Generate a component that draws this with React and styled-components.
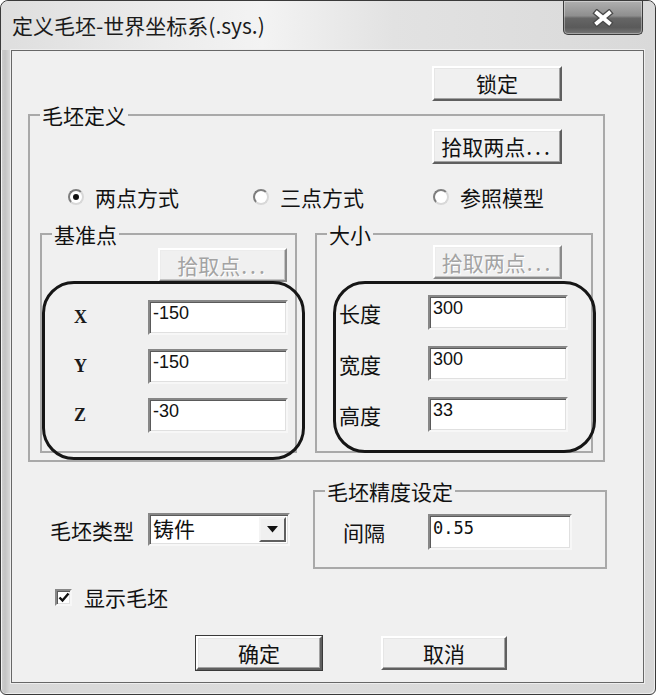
import React from 'react';
import styled, { createGlobalStyle, css } from 'styled-components';

const CJK = `"Noto Sans CJK SC", "Noto Sans CJK JP", "Liberation Sans", sans-serif`;

const GlobalStyle = createGlobalStyle`
  html, body { margin: 0; padding: 0; background: #ffffff; }
  body { font-family: ${CJK}; }
  *, *::before, *::after { box-sizing: border-box; }
`;

const Window = styled.div`
  width: 656px;
  height: 695px;
  border: 1px solid #3a3a3a;
  border-radius: 8px 8px 6px 6px;
  background: linear-gradient(90deg, #cfcfcf 0px, #c4c4c4 4px, #d8d8d8 9px, #dcdcdc 50%, #d6d6d6 100%);
  box-shadow: inset 1px 1px 0 #f2f2f2, inset -1px -1px 0 #ededed;
  padding: 0 11px 11px 10px;
  display: flex;
  flex-direction: column;
  font-family: ${CJK};
  color: #111;
  overflow: hidden;
`;

const TitleBar = styled.div`
  height: 49px;
  margin: 0 -11px 0 -10px;
  padding: 0 12px 0 11px;
  display: flex;
  align-items: flex-start;
  justify-content: space-between;
  background: linear-gradient(90deg, #dedede 0%, #ececec 25%, #f3f3f3 40%, #e2e2e2 60%, #d9d9d9 100%);
  border-radius: 7px 7px 0 0;
`;

const Title = styled.div`
  font-size: 21px;
  line-height: 49px;
  color: #1b1b1b;
  white-space: nowrap;
`;

const CloseButton = styled.div`
  width: 80px;
  height: 34px;
  border: 1px solid #3c3c3c;
  border-top: none;
  border-radius: 0 0 5px 5px;
  background: linear-gradient(180deg, #b0b0b0 0%, #8e8e8e 45%, #666666 52%, #5a5a5a 80%, #777777 100%);
  box-shadow: inset 0 0 0 1px rgba(255, 255, 255, 0.35);
  display: flex;
  align-items: center;
  justify-content: center;
`;

const Client = styled.div`
  flex: 1;
  background: #f0f0f0;
  border: 1px solid #676767;
  box-shadow: 0 0 0 1px #eeeeee;
  display: flex;
  flex-direction: column;
`;

const RightRow = styled.div`
  display: flex;
  justify-content: flex-end;
  padding-right: ${(p) => p.$pr}px;
  margin-top: ${(p) => p.$mt}px;
`;

const Button = styled.button`
  width: ${(p) => p.$w}px;
  height: ${(p) => p.$h || 35}px;
  padding: 0;
  margin: 0;
  font-family: ${CJK};
  font-size: 21px;
  line-height: 1;
  color: #111;
  background: #f0f0f0;
  border: 2px solid;
  border-color: #ffffff #5f5f5f #5f5f5f #ffffff;
  box-shadow: inset -1px -1px 0 #a2a2a2, inset 1px 1px 0 #e6e6e6;
  display: flex;
  align-items: center;
  justify-content: center;
  ${(p) =>
    p.$default &&
    css`
      outline: 1px solid #3a3a3a;
    `}
  ${(p) =>
    p.disabled &&
    css`
      color: #a3a3a3;
      text-shadow: 1px 1px 0 #ffffff;
      border-color: #ffffff #8a8a8a #8a8a8a #ffffff;
      box-shadow: inset -1px -1px 0 #c4c4c4, inset 1px 1px 0 #ececec;
    `}
`;

const Dots = styled.span`
  letter-spacing: 3px;
  margin-left: 1px;
`;

const Group = styled.fieldset`
  margin: ${(p) => p.$m || 0};
  padding: 0;
  min-width: 0;
  width: ${(p) => p.$w}px;
  height: ${(p) => p.$h}px;
  border: 2px solid #a9a9a9;
  display: flex;
  flex-direction: column;
  position: relative;
`;

const Legend = styled.legend`
  margin-left: 10px;
  padding: 0 2px;
  font-size: 21px;
  line-height: 22px;
  height: 22px;
  color: #111;
`;

const RadioRow = styled.div`
  display: flex;
  align-items: center;
  height: 24px;
  margin-top: 21px;
  padding-left: 38px;
`;

const RadioItem = styled.label`
  display: flex;
  align-items: center;
  gap: 11px;
  width: ${(p) => p.$w}px;
  font-size: 21px;
  line-height: 24px;
`;

const RadioCircle = styled.span`
  flex: none;
  width: 16px;
  height: 16px;
  border-radius: 50%;
  background: #ffffff;
  border: 2px solid;
  border-color: #7e7e7e #d8d8d8 #d8d8d8 #7e7e7e;
  display: flex;
  align-items: center;
  justify-content: center;
`;

const RadioDot = styled.span`
  width: 6px;
  height: 6px;
  border-radius: 50%;
  background: #111;
`;

const SubRow = styled.div`
  position: relative;
  display: flex;
  gap: 18px;
  margin-top: 14px;
  padding-left: 10px;
`;

const FieldGrid = styled.div`
  display: grid;
  grid-template-columns: ${(p) => p.$label}px ${(p) => p.$input}px;
  grid-auto-rows: ${(p) => p.$rh || 35}px;
  row-gap: ${(p) => p.$gap || 0}px;
  align-items: center;
  margin-top: ${(p) => p.$mt}px;
  padding-left: ${(p) => p.$pl}px;
`;

const AxisLabel = styled.span`
  font-family: "Liberation Serif", "DejaVu Serif", serif;
  font-weight: bold;
  font-size: 18px;
  color: #1a1a1a;
`;

const Label = styled.span`
  font-size: 21px;
  line-height: 24px;
  color: #111;
  white-space: nowrap;
`;

const sunken = css`
  background: #ffffff;
  border: 2px solid;
  border-color: #878787 #f7f7f7 #f7f7f7 #878787;
  box-shadow: inset 1px 1px 0 #5a5a5a, inset -1px -1px 0 #e0e0e0;
`;

const Field = styled.input`
  ${sunken};
  width: 100%;
  height: ${(p) => p.$h || 35}px;
  padding: 1px 3px 10px;
  margin: 0;
  font-family: ${(p) => (p.$mono ? `"DejaVu Sans Mono", "Liberation Mono", monospace` : `"Liberation Sans", Arial, sans-serif`)};
  font-size: ${(p) => (p.$mono ? 17 : 18)}px;
  color: #111;
  outline: none;
`;

const Annotation = styled.div`
  position: absolute;
  left: ${(p) => p.$x}px;
  top: ${(p) => p.$y}px;
  width: ${(p) => p.$w}px;
  height: ${(p) => p.$h}px;
  border: 3px solid #161616;
  border-radius: 32px;
  pointer-events: none;
`;

const BottomRow = styled.div`
  display: flex;
  align-items: flex-start;
  margin-top: 18px;
  padding-left: 38px;
`;

const TypeRow = styled.div`
  display: flex;
  align-items: center;
  margin-top: 33px;
`;

const TypeLabel = styled(Label)`
  width: 98px;
`;

const Combo = styled.div`
  ${sunken};
  width: 142px;
  height: 33px;
  padding: 2px;
  display: flex;
  align-items: stretch;
`;

const ComboText = styled.span`
  flex: 1;
  font-size: 21px;
  line-height: 22px;
  padding-left: 1px;
  color: #111;
`;

const ComboButton = styled.span`
  width: 27px;
  background: #f0f0f0;
  border: 2px solid;
  border-color: #f4f4f4 #5f5f5f #5f5f5f #f4f4f4;
  display: flex;
  align-items: center;
  justify-content: center;
`;

const CheckRow = styled.label`
  display: flex;
  align-items: center;
  gap: 12px;
  height: 24px;
  margin-top: 16px;
  padding-left: 43px;
  font-size: 21px;
  line-height: 24px;
`;

const CheckBox = styled.span`
  ${sunken};
  width: 17px;
  height: 17px;
  display: flex;
  align-items: center;
  justify-content: center;
`;

const FooterRow = styled.div`
  display: flex;
  gap: 59px;
  margin-top: 27px;
  padding-left: 184px;
`;

const CloseIcon = () => (
  <svg width="24" height="18" viewBox="0 0 24 18">
    <g strokeLinecap="square">
      <path d="M6 4 L18 14 M18 4 L6 14" stroke="#4a4a4a" strokeWidth="6.5" />
      <path d="M6 4 L18 14 M18 4 L6 14" stroke="#ffffff" strokeWidth="4" />
    </g>
  </svg>
);

const Radio = ({ checked, width, children }) => (
  <RadioItem $w={width}>
    <RadioCircle>{checked && <RadioDot />}</RadioCircle>
    {children}
  </RadioItem>
);

export default function App() {
  return (
    <>
      <GlobalStyle />
      <Window>
        <TitleBar>
          <Title>定义毛坯-世界坐标系(.sys.)</Title>
          <CloseButton>
            <CloseIcon />
          </CloseButton>
        </TitleBar>
        <Client>
          <RightRow $pr={81} $mt={15}>
            <Button $w={130}>锁定</Button>
          </RightRow>

          <Group $w={577} $h={358} $m="3px 0 0 16px">
            <Legend>毛坯定义</Legend>
            <RightRow $pr={41} $mt={3}>
              <Button $w={130}>
                拾取两点<Dots>...</Dots>
              </Button>
            </RightRow>
            <RadioRow>
              <Radio checked width={185}>两点方式</Radio>
              <Radio width={180}>三点方式</Radio>
              <Radio width={160}>参照模型</Radio>
            </RadioRow>
            <SubRow>
              <Group $w={257} $h={230}>
                <Legend>基准点</Legend>
                <RightRow $pr={8} $mt={3}>
                  <Button $w={129} $h={34} disabled>
                    拾取点<Dots>...</Dots>
                  </Button>
                </RightRow>
                <FieldGrid $label={74} $input={140} $gap={14} $mt={18} $pl={32}>
                  <AxisLabel>X</AxisLabel>
                  <Field readOnly value="-150" />
                  <AxisLabel>Y</AxisLabel>
                  <Field readOnly value="-150" />
                  <AxisLabel>Z</AxisLabel>
                  <Field readOnly value="-30" />
                </FieldGrid>
              </Group>
              <Group $w={278} $h={230}>
                <Legend>大小</Legend>
                <RightRow $pr={29} $mt={0}>
                  <Button $w={129} $h={34} disabled>
                    拾取两点<Dots>...</Dots>
                  </Button>
                </RightRow>
                <FieldGrid $label={89} $input={140} $gap={16} $mt={16} $pl={22}>
                  <Label>长度</Label>
                  <Field readOnly value="300" />
                  <Label>宽度</Label>
                  <Field readOnly value="300" />
                  <Label>高度</Label>
                  <Field readOnly value="33" />
                </FieldGrid>
              </Group>
              <Annotation $x={12} $y={58} $w={263} $h={179} />
              <Annotation $x={303} $y={58} $w={263} $h={172} />
            </SubRow>
          </Group>

          <BottomRow>
            <TypeRow>
              <TypeLabel>毛坯类型</TypeLabel>
              <Combo>
                <ComboText>铸件</ComboText>
                <ComboButton>
                  <svg width="11" height="7" viewBox="0 0 11 7">
                    <polygon points="0,0 11,0 5.5,6.5" fill="#111" />
                  </svg>
                </ComboButton>
              </Combo>
            </TypeRow>
            <Group $w={294} $h={89} $m="0 0 0 23px">
              <Legend>毛坯精度设定</Legend>
              <FieldGrid $label={85} $input={144} $rh={36} $mt={12} $pl={28}>
                <Label>间隔</Label>
                <Field readOnly value="0.55" $mono $h={36} />
              </FieldGrid>
            </Group>
          </BottomRow>

          <CheckRow>
            <CheckBox>
              <svg width="12" height="11" viewBox="0 0 12 11">
                <path d="M1.5 5.5 L4.5 8.5 L10.5 1.5" fill="none" stroke="#111" strokeWidth="2.4" />
              </svg>
            </CheckBox>
            显示毛坯
          </CheckRow>

          <FooterRow>
            <Button $w={126} $h={34} $default>
              确定
            </Button>
            <Button $w={126} $h={34}>
              取消
            </Button>
          </FooterRow>
        </Client>
      </Window>
    </>
  );
}
